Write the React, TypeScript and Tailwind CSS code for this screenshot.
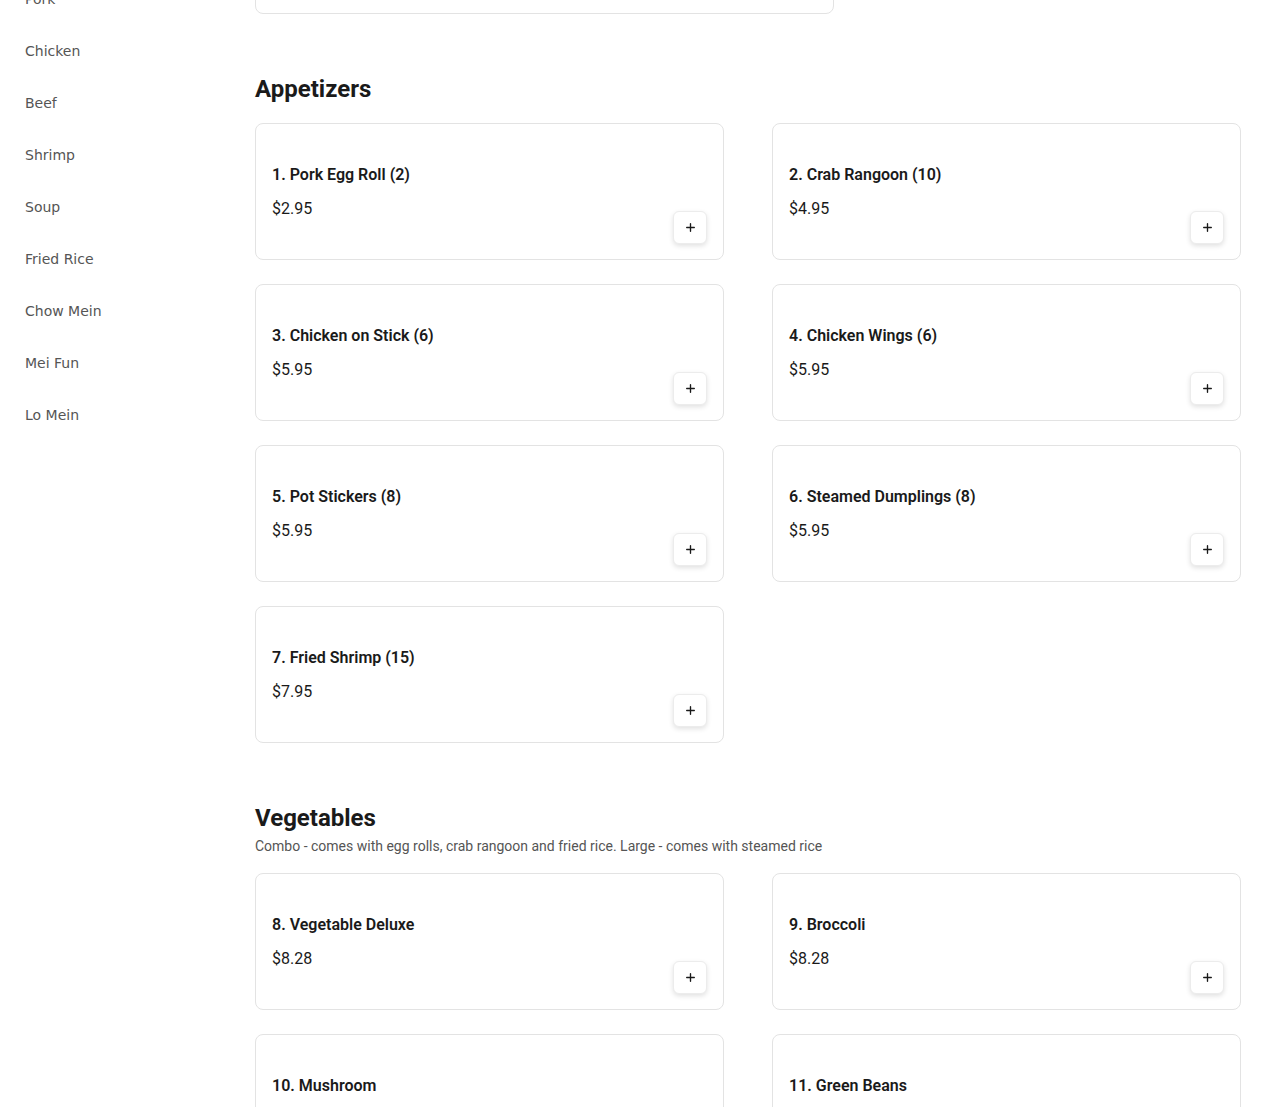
import { Plus } from "lucide-react";

type Item = { name: string; price: string };

const CATEGORIES = ["Pork", "Chicken", "Beef", "Shrimp", "Soup", "Fried Rice", "Chow Mein", "Mei Fun", "Lo Mein"];

const SECTIONS: { title: string; note?: string; items: Item[] }[] = [
  {
    title: "Appetizers",
    items: [
      { name: "1. Pork Egg Roll (2)", price: "$2.95" },
      { name: "2. Crab Rangoon (10)", price: "$4.95" },
      { name: "3. Chicken on Stick (6)", price: "$5.95" },
      { name: "4. Chicken Wings (6)", price: "$5.95" },
      { name: "5. Pot Stickers (8)", price: "$5.95" },
      { name: "6. Steamed Dumplings (8)", price: "$5.95" },
      { name: "7. Fried Shrimp (15)", price: "$7.95" },
    ],
  },
  {
    title: "Vegetables",
    note: "Combo - comes with egg rolls, crab rangoon and fried rice. Large - comes with steamed rice",
    items: [
      { name: "8. Vegetable Deluxe", price: "$8.28" },
      { name: "9. Broccoli", price: "$8.28" },
      { name: "10. Mushroom", price: "$8.28" },
      { name: "11. Green Beans", price: "$8.28" },
    ],
  },
];

function MenuCard({ item }: { item: Item }) {
  return (
    <div className="flex flex-col rounded-lg border border-[#e3e3e3] bg-white px-4 pb-[15px] pt-[39px]">
      <h3 className="text-base leading-6 font-semibold text-[#1a1a1a]">{item.name}</h3>
      <p className="mt-[10px] text-base leading-6 text-[#1a1a1a]">{item.price}</p>
      <div className="-mt-[10px] flex justify-end">
        <button className="flex h-[33px] w-[34px] items-center justify-center rounded-md border border-[#ececec] bg-white text-[#1a1a1a] shadow-[0_2px_5px_rgba(0,0,0,0.12)]">
          <Plus size={13} strokeWidth={2.5} />
        </button>
      </div>
    </div>
  );
}

export default function App() {
  return (
    <div className="flex h-[1107px] items-start overflow-hidden bg-white">
      {/* Category sidebar */}
      <nav className="-mt-[27px] w-[255px] shrink-0 pl-[25px] font-['DejaVu_Sans',sans-serif]">
        {CATEGORIES.map((c) => (
          <div key={c} className="flex h-[52px] items-center text-sm text-[#555]">
            {c}
          </div>
        ))}
      </nav>

      {/* Menu */}
      <main className="w-[986px] font-['Roboto',sans-serif]">
        <div className="-mt-[26px] h-[40px] w-[579px] rounded-lg border border-[#e3e3e3]" />
        {SECTIONS.map((s) => (
          <section key={s.title} className="pt-[59px]">
            <h2 className="text-2xl leading-8 font-bold text-[#1a1a1a]">{s.title}</h2>
            {s.note && <p className="mt-[2px] text-sm leading-5 text-[#555]">{s.note}</p>}
            <div className={`grid grid-cols-2 gap-x-12 gap-y-6 ${s.note ? "mt-[17px]" : "mt-[18px]"}`}>
              {s.items.map((it) => (
                <MenuCard key={it.name} item={it} />
              ))}
            </div>
          </section>
        ))}
      </main>
    </div>
  );
}
